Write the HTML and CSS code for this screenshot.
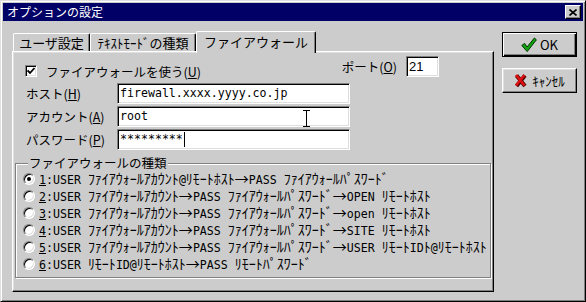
FILE: index.html
```html
<!DOCTYPE html>
<html lang="ja">
<head>
<meta charset="utf-8">
<title>オプションの設定</title>
<link rel="stylesheet" href="styles.css">
</head>
<body>
<div class="window">
  <div class="titlebar">
    <span class="title">オプションの設定</span>
    <span class="close"><svg width="8" height="7" viewBox="0 0 8 7"><path d="M0.5 0.5 L7.5 6.5 M7.5 0.5 L0.5 6.5" stroke="#000" stroke-width="1.6"/></svg></span>
  </div>
  <div class="main">
    <div class="tabs-area">
      <div class="tabs">
        <div class="tab t1">ユーザ設定</div>
        <div class="tab t2">ﾃｷｽﾄﾓｰﾄﾞの種類</div>
        <div class="tab active">ファイアウォール</div>
      </div>
      <div class="panel">
        <div class="row1">
          <div class="check">
            <span class="cb"><svg width="8" height="8" viewBox="0 0 8 8"><path d="M0.5 3.5 L3 6 L7.5 1" stroke="#000" stroke-width="1.8" fill="none"/></svg></span>
            <span>ファイアウォールを使う(<u>U</u>)</span>
          </div>
          <div class="port">
            <span>ポート(<u>O</u>)</span>
            <div class="field port-field">21</div>
          </div>
        </div>
        <div class="fields">
          <div class="frow"><span class="flabel">ホスト(<u>H</u>)</span><div class="field">firewall.xxxx.yyyy.co.jp</div></div>
          <div class="frow"><span class="flabel">アカウント(<u>A</u>)</span><div class="field has-cursor">root<svg class="ibeam" width="7" height="17" viewBox="0 0 7 17"><path d="M0 0.5h7M0 16.5h7M3.5 0v17" stroke="#000" stroke-width="1"/></svg></div></div>
          <div class="frow"><span class="flabel">パスワード(<u>P</u>)</span><div class="field">*********<span class="caret"></span></div></div>
        </div>
        <fieldset class="group">
          <legend>ファイアウォールの種類</legend>
          <div class="radio"><span class="rb sel"></span><span class="rt"><span class="a"><u>1</u>:USER </span>ﾌｧｲｱｳｫｰﾙｱｶｳﾝﾄ<span class="a">@</span>ﾘﾓｰﾄﾎｽﾄ→<span class="a">PASS </span>ﾌｧｲｱｳｫｰﾙﾊﾟｽﾜｰﾄﾞ</span></div>
          <div class="radio"><span class="rb"></span><span class="rt"><span class="a"><u>2</u>:USER </span>ﾌｧｲｱｳｫｰﾙｱｶｳﾝﾄ→<span class="a">PASS </span>ﾌｧｲｱｳｫｰﾙﾊﾟｽﾜｰﾄﾞ→<span class="a">OPEN </span>ﾘﾓｰﾄﾎｽﾄ</span></div>
          <div class="radio"><span class="rb"></span><span class="rt"><span class="a"><u>3</u>:USER </span>ﾌｧｲｱｳｫｰﾙｱｶｳﾝﾄ→<span class="a">PASS </span>ﾌｧｲｱｳｫｰﾙﾊﾟｽﾜｰﾄﾞ→<span class="a">open </span>ﾘﾓｰﾄﾎｽﾄ</span></div>
          <div class="radio"><span class="rb"></span><span class="rt"><span class="a"><u>4</u>:USER </span>ﾌｧｲｱｳｫｰﾙｱｶｳﾝﾄ→<span class="a">PASS </span>ﾌｧｲｱｳｫｰﾙﾊﾟｽﾜｰﾄﾞ→<span class="a">SITE </span>ﾘﾓｰﾄﾎｽﾄ</span></div>
          <div class="radio"><span class="rb"></span><span class="rt"><span class="a"><u>5</u>:USER </span>ﾌｧｲｱｳｫｰﾙｱｶｳﾝﾄ→<span class="a">PASS </span>ﾌｧｲｱｳｫｰﾙﾊﾟｽﾜｰﾄﾞ→<span class="a">USER </span>ﾘﾓｰﾄ<span class="a">ID</span>ﾄ<span class="a">@</span>ﾘﾓｰﾄﾎｽﾄ</span></div>
          <div class="radio"><span class="rb"></span><span class="rt"><span class="a"><u>6</u>:USER </span>ﾘﾓｰﾄ<span class="a">ID@</span>ﾘﾓｰﾄﾎｽﾄ→<span class="a">PASS </span>ﾘﾓｰﾄﾊﾟｽﾜｰﾄﾞ</span></div>
        </fieldset>
      </div>
    </div>
    <div class="buttons">
      <div class="btn default">
        <svg width="16" height="16" viewBox="0 0 16 16"><path d="M0.8 8.5 L3.6 6.4 L6 10 L13.4 1 L15.4 2.8 L6.2 14.6 Z" fill="#10a010" stroke="#003800" stroke-width="1"/></svg>
        <span>OK</span>
      </div>
      <div class="btn cancel">
        <svg width="13" height="15" viewBox="0 0 13 15"><path d="M2.5 2.5 L11 13 M11 2.5 L2.5 13" stroke="#500000" stroke-width="4"/><path d="M2 2 L10.5 12.5 M10.5 2 L2 12.5" stroke="#e01010" stroke-width="2.6"/></svg>
        <span>ｷｬﾝｾﾙ</span>
      </div>
    </div>
  </div>
</div>
</body>
</html>
```

FILE: styles.css
```css
* { box-sizing: border-box; }
html, body { margin: 0; padding: 0; }
body {
  width: 586px;
  height: 302px;
  overflow: hidden;
  background: #cccccc;
  font-family: "Noto Sans CJK JP", sans-serif;
  font-size: 12.5px;
  color: #000;
}
.window {
  width: 586px;
  height: 302px;
  border: 1px solid;
  border-color: #dfdfdf #000 #000 #dfdfdf;
  box-shadow: inset 1px 1px 0 #fff, inset -1px -1px 0 #808080;
  padding: 2px;
  display: flex;
  flex-direction: column;
  background: #cccccc;
}
.titlebar {
  height: 18px;
  flex: none;
  background: #000066;
  color: #fff;
  display: flex;
  align-items: center;
  justify-content: space-between;
  padding: 0 2px 0 4px;
}
.title { font-size: 12px; line-height: 18px; }
.close {
  width: 16px;
  height: 14px;
  background: #cccccc;
  border: 1px solid;
  border-color: #fff #000 #000 #fff;
  box-shadow: inset -1px -1px 0 #808080;
  display: flex;
  align-items: center;
  justify-content: center;
}
.main {
  display: flex;
  gap: 8px;
  padding: 10px 0 0 9px;
}
.tabs-area { width: 482px; }
.tabs {
  display: flex;
  align-items: flex-end;
  height: 20px;
  padding-left: 1px;
  position: relative;
  z-index: 1;
}
.tab {
  height: 18px;
  background: #cccccc;
  border-top: 1px solid #fff;
  border-left: 1px solid #fff;
  border-right: 1px solid #000;
  border-radius: 2px 2px 0 0;
  box-shadow: inset -1px 0 0 #808080;
  font-size: 13px;
  line-height: 17px;
  text-align: center;
  white-space: nowrap;
}
.t1 { width: 77px; }
.t2 { width: 106px; }
.tab.active {
  width: 120px;
  height: 22px;
  margin-bottom: -2px;
  line-height: 20px;
}
.panel {
  height: 241px;
  border: 1px solid;
  border-color: #fff #000 #000 #fff;
  box-shadow: inset -1px -1px 0 #808080, inset 1px 1px 0 #dfdfdf;
  padding: 4px 0 0 12px;
}
.row1 { display: flex; height: 21px; }
.check {
  display: flex;
  align-items: center;
  gap: 9px;
  margin-top: 9px;
  height: 12px;
}
.cb {
  width: 12px;
  height: 12px;
  background: #fff;
  border: 1px solid;
  border-color: #808080 #fff #fff #808080;
  box-shadow: inset 1px 1px 0 #000, inset -1px -1px 0 #dfdfdf;
  display: flex;
  align-items: center;
  justify-content: center;
}
.port {
  margin-left: auto;
  margin-right: 54px;
  display: flex;
  align-items: center;
  gap: 9px;
}
.fields {
  display: flex;
  flex-direction: column;
  gap: 2px;
  margin-top: 6px;
}
.frow { display: flex; align-items: center; line-height: 16px; }
.flabel { width: 92px; padding-left: 1px; }
.field {
  width: 233px;
  height: 21px;
  background: #fff;
  border: 1px solid;
  border-color: #808080 #fff #fff #808080;
  box-shadow: inset 1px 1px 0 #000, inset -1px -1px 0 #dfdfdf;
  padding-left: 2px;
  font-family: "DejaVu Sans Mono", monospace;
  font-size: 11.6px;
  line-height: 19px;
  white-space: pre;
  display: flex;
  align-items: center;
}
.port-field { width: 33px; font-family: "Liberation Sans", sans-serif; font-size: 13px; }
.has-cursor { position: relative; }
.ibeam { position: absolute; left: 185px; top: 3px; }
.caret {
  display: inline-block;
  width: 1px;
  height: 15px;
  background: #000;
  margin-left: 1px;
}
.group {
  margin: 6px 0 0 -10px;
  width: 476px;
  padding: 0 0 5px 7px;
  border: 1px solid #808080;
  box-shadow: 1px 1px 0 #fff, inset 1px 1px 0 #fff;
  min-width: 0;
}
.group legend {
  margin-left: 5px;
  padding: 0 1px;
  line-height: 14px;
  background: #cccccc;
  font-size: 12.5px;
}
.radio {
  display: flex;
  align-items: center;
  gap: 4px;
  height: 17px;
  line-height: 16px;
  white-space: pre;
  font-size: 14px;
}
.rt { line-height: 16px; }
.a {
  font-family: "DejaVu Sans Mono", monospace;
  font-size: 11.6px;
}
.rb {
  flex: none;
  width: 12px;
  height: 12px;
  border-radius: 50%;
  background: #fff;
  border: 1px solid;
  border-color: #808080 #fff #fff #808080;
  box-shadow: inset 1px 1px 0 #000, inset -1px -1px 0 #dfdfdf;
  display: flex;
  align-items: center;
  justify-content: center;
}
.rb.sel::after {
  content: "";
  width: 4px;
  height: 4px;
  border-radius: 50%;
  background: #000;
}
.buttons {
  display: flex;
  flex-direction: column;
  gap: 11px;
  margin-top: 1px;
  width: 75px;
}
.btn {
  height: 25px;
  display: flex;
  align-items: center;
  justify-content: center;
  gap: 5px;
  background: #cccccc;
  border: 1px solid;
  border-color: #fff #000 #000 #fff;
  box-shadow: inset -1px -1px 0 #808080, inset 1px 1px 0 #dfdfdf;
  font-size: 13px;
}
.btn.default {
  border-color: #000;
  box-shadow: inset 1px 1px 0 #fff, inset -1px -1px 0 #000, inset -2px -2px 0 #808080;
  gap: 3px;
}
```
